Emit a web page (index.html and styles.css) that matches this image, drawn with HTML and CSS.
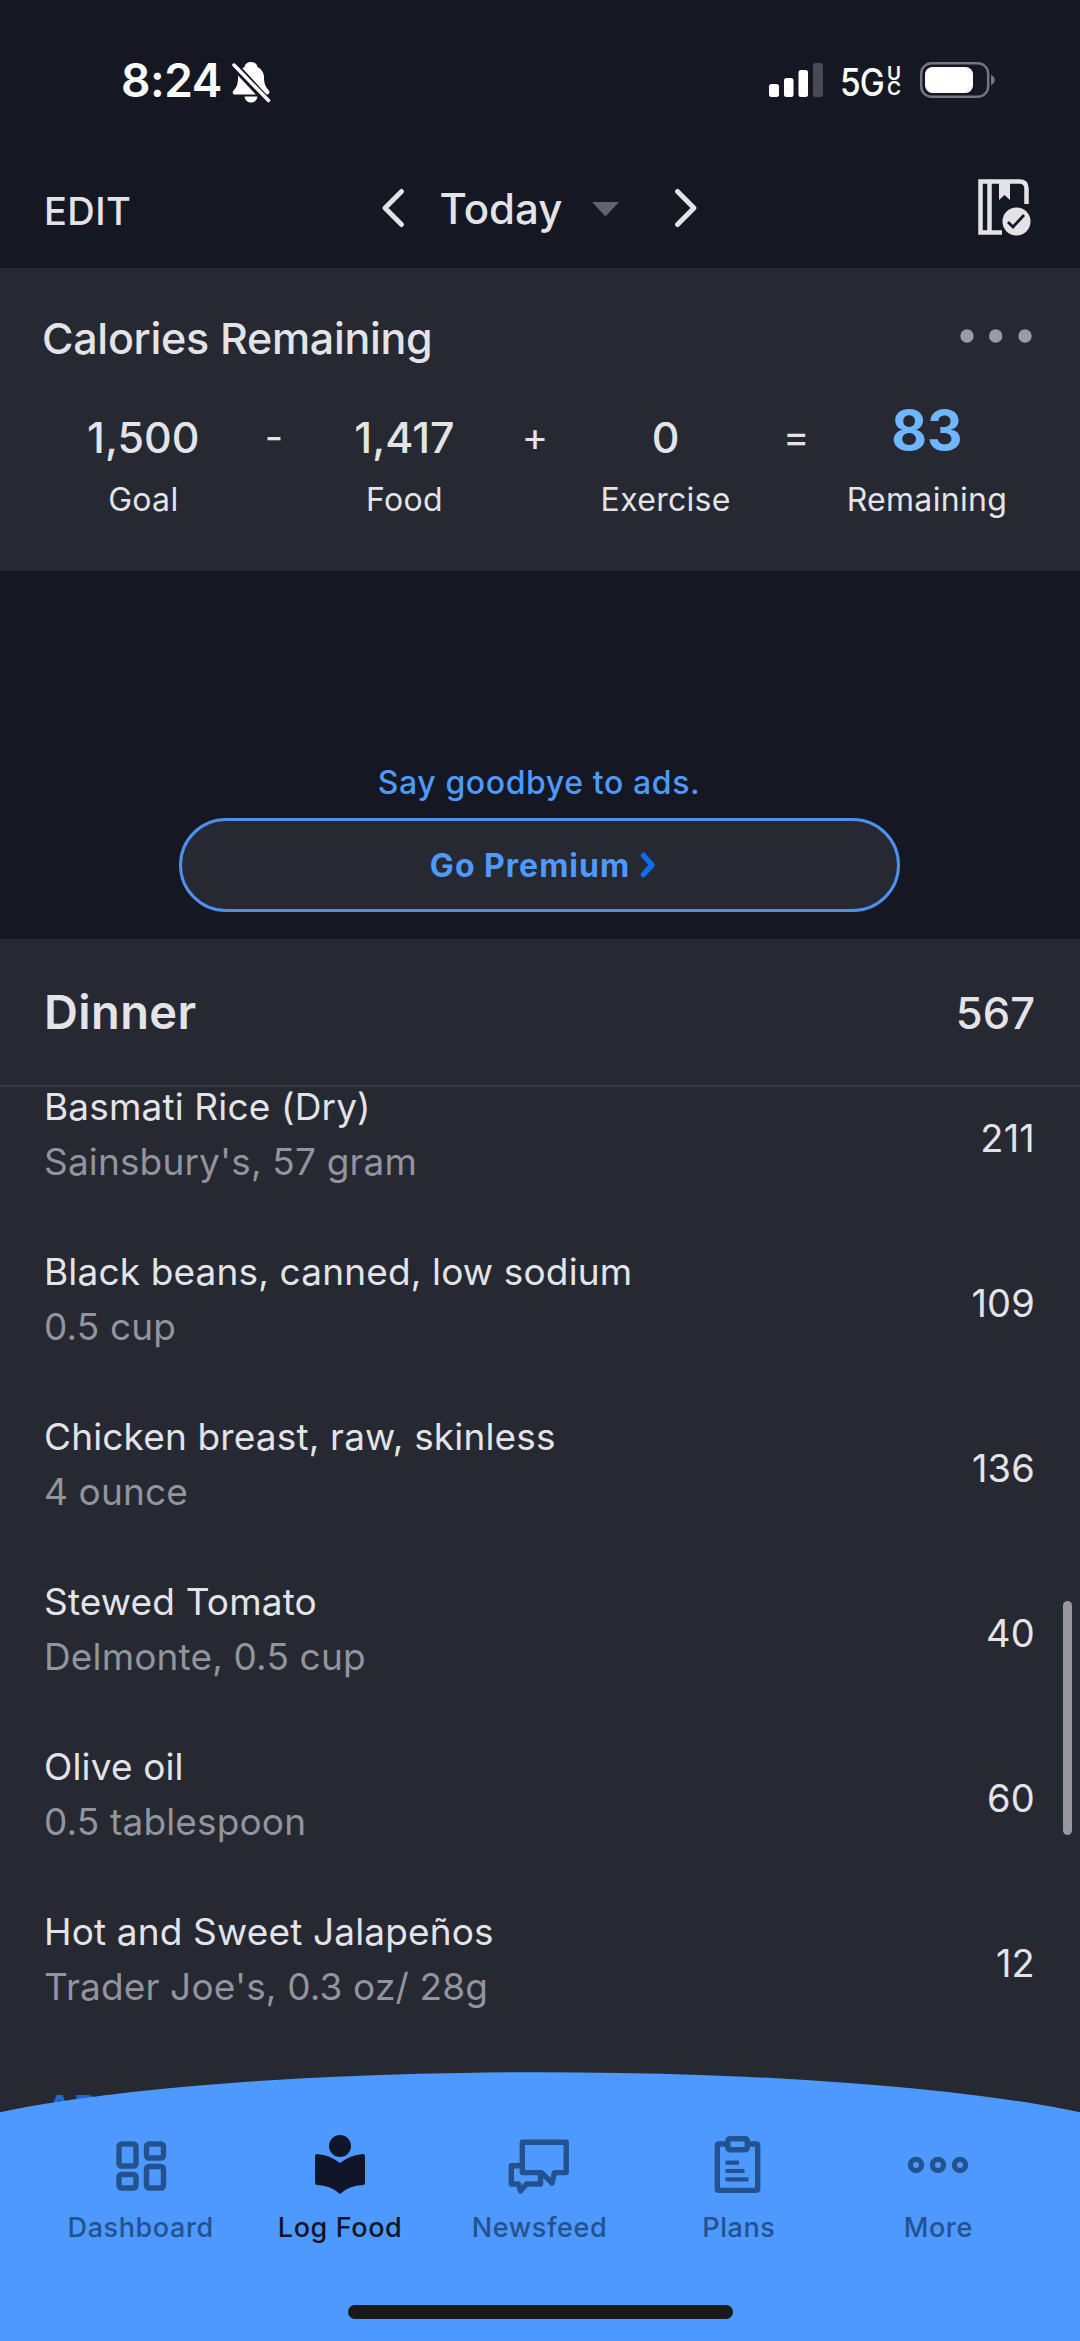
FILE: index.html
```html
<!DOCTYPE html>
<html lang="en">
<head>
<meta charset="utf-8">
<title>Food Diary</title>
<link rel="stylesheet" href="styles.css">
</head>
<body>
<div class="screen">
  <div class="status">
    <span class="time">8:24</span>
    <svg class="bell" viewBox="0 0 38 42" width="38" height="42"><path fill="#fff" d="M19 1c3.500 0 6 2 6.500 5 4 2 6.500 6 6.500 10 0 7 1.500 9.500 4.500 13 2.500 3-.5 4.500-1.500 4.500H3c-2.500 0-3-2.500-1.500-4 3-3 4.500-6 4.500-13 0-5 2.500-8.500 6.500-10.500C13 3 15.500 1 19 1zM12.500 35.500h13c-.5 3.500-3 6-6.500 6s-6-2.500-6.500-6z"/><path stroke="#151722" stroke-width="8" d="M-1 1l38 41"/><path stroke="#fff" stroke-width="3.500" stroke-linecap="round" d="M2 4l34.500 35.500"/></svg>
    <div class="status-right">
      <svg class="signal" width="54" height="34"><rect y="21" width="10" height="13" rx="2.500" fill="#fff"/><rect x="15" y="15" width="9.500" height="19" rx="2.500" fill="#fff"/><rect x="29.500" y="7" width="9.500" height="27" rx="2.500" fill="#fff"/><rect x="44" width="10" height="34" rx="2.500" fill="#484a54"/></svg>
      <span class="net">5G</span>
      <span class="uc"><span>U</span><span>C</span></span>
      <svg class="battery" width="76" height="36"><rect x="1.200" y="1.200" width="67" height="33.600" rx="10.500" fill="none" stroke="#757681" stroke-width="2.400"/><rect x="5" y="5" width="48" height="26" rx="7.500" fill="#fff"/><path fill="#757681" d="M71 13c5 1.500 5 8.500 0 10z"/></svg>
    </div>
  </div>
  <div class="nav">
    <span class="edit">EDIT</span>
    <div class="date">
      <svg width="22" height="38"><path class="chev" d="M19.500 2.500L3 19l16.500 16.500"/></svg>
      <span class="today">Today</span>
      <svg class="tri" width="27" height="15"><path fill="#636467" d="M0 0h27L13.500 14.500z"/></svg>
      <svg width="22" height="38"><path class="chev" d="M2.500 2.500L19 19 2.500 35.500"/></svg>
    </div>
    <svg class="book" viewBox="0 0 54 57" width="54" height="57"><path fill="none" stroke="#e3e3e6" stroke-width="4.500" d="M24 53.500H2.500V2.500h39q7 0 7 7V25M11.500 2.500v51"/><path fill="#e3e3e6" d="M21 2h11v19l-5.500-5L21 21z"/><circle cx="38.500" cy="42.500" r="14" fill="#e3e3e6"/><path fill="none" stroke="#151722" stroke-width="2.800" d="M30 43l5 5 11-12"/></svg>
  </div>
  <section class="summary">
    <div class="summary-head"><h2>Calories Remaining</h2><svg width="72" height="14" fill="#9b9ca3"><circle cx="7" cy="7" r="6.700"/><circle cx="35.700" cy="7" r="6.700"/><circle cx="65" cy="7" r="6.700"/></svg></div>
    <div class="equation">
      <div class="term"><b>1,500</b><span>Goal</span></div><i>-</i>
      <div class="term"><b>1,417</b><span>Food</span></div><i>+</i>
      <div class="term"><b>0</b><span>Exercise</span></div><i>=</i>
      <div class="term left"><b>83</b><span>Remaining</span></div>
    </div>
  </section>
  <section class="promo">
    <span class="bye">Say goodbye to ads.</span>
    <div class="premium"><span>Go Premium</span><svg width="16" height="26"><path fill="none" stroke="#0f6df0" stroke-width="5.500" stroke-linecap="round" stroke-linejoin="round" d="M3.500 3.500L12 13 3.500 22.500"/></svg></div>
  </section>
  <section class="meal">
    <div class="meal-head"><h1>Dinner</h1><span>567</span></div>
    <div class="foods">
      <div class="food"><div><p>Basmati Rice (Dry)</p><small>Sainsbury's, 57 gram</small></div><span>211</span></div>
      <div class="food"><div><p>Black beans, canned, low sodium</p><small>0.5 cup</small></div><span>109</span></div>
      <div class="food"><div><p>Chicken breast, raw, skinless</p><small>4 ounce</small></div><span>136</span></div>
      <div class="food"><div><p>Stewed Tomato</p><small>Delmonte, 0.5 cup</small></div><span>40</span></div>
      <div class="food"><div><p>Olive oil</p><small>0.5 tablespoon</small></div><span>60</span></div>
      <div class="food"><div><p>Hot and Sweet Jalapeños</p><small>Trader Joe's, 0.3 oz/ 28g</small></div><span>12</span></div>
      <div class="add">ADD FOOD</div>
    </div>
  </section>
  <div class="scrollbar"></div>
  <nav class="tabs">
    <svg class="curve" width="1080" height="42" viewBox="0 0 1080 42"><path fill="#4e99ff" d="M0 41.300A636 85 0 0 1 1080 41.300V42H0z"/></svg>
    <div class="tab-row">
      <div class="tab"><svg width="64" height="64"><g fill="none" stroke="currentColor" stroke-width="5.400"><rect x="10" y="12" width="17" height="22" rx="2.500"/><rect x="37.500" y="12" width="17" height="14" rx="2.500"/><rect x="10" y="42.500" width="17" height="13.500" rx="2.500"/><rect x="37.500" y="34.500" width="17" height="21.500" rx="2.500"/></g></svg><span>Dashboard</span></div>
      <div class="tab active"><svg width="64" height="64"><circle cx="32" cy="14" r="11" fill="currentColor"/><path fill="currentColor" d="M7 24q0-2 2-2 13 1 23 9 10-8 23-9 2 0 2 2v27q0 2-2 2-14 .5-23 9-9-8.500-23-9-2 0-2-2z"/></svg><span>Log Food</span></div>
      <div class="tab"><svg width="64" height="64"><path fill="none" stroke="currentColor" stroke-width="5.400" stroke-linejoin="round" d="M15.300 10.200H59.200V40.600H47.500L45 51 34.500 40.600H15.300zM15.300 33.800H4.300V52H11.500L13.500 59 19.500 52H33.500V42"/></svg><span>Newsfeed</span></div>
      <div class="tab"><svg width="64" height="64"><g fill="none" stroke="currentColor" stroke-width="5.400"><path d="M20 12h-8q-1.700 0-1.700 1.700v43q0 1.700 1.700 1.700h37q1.700 0 1.700-1.700v-43q0-1.700-1.700-1.700h-8"/><rect x="20.800" y="6.700" width="19.500" height="11" rx="2"/><path stroke-width="4.200" d="M18.500 30.700h13.500M18.500 39h19M18.500 47.300h23"/></g></svg><span>Plans</span></div>
      <div class="tab"><svg width="64" height="64"><g fill="none" stroke="currentColor" stroke-width="5.200"><circle cx="10" cy="33" r="5.600"/><circle cx="32" cy="33" r="5.600"/><circle cx="54" cy="33" r="5.600"/></g></svg><span>More</span></div>
    </div>
    <div class="home"></div>
  </nav>
</div>
</body>
</html>
```
FILE: styles.css
```css
* { box-sizing: border-box; }
body { margin: 0; background: #151722; }
h1, h2, p { margin: 0; font-weight: inherit; }
svg { display: block; flex: none; overflow: visible; }
.screen {
  position: relative;
  width: 1080px; height: 2341px;
  overflow: hidden;
  display: flex; flex-direction: column;
  background: #151722; color: #e3e3e8;
  font-family: Inter, "Liberation Sans", sans-serif;
  white-space: nowrap;
}
.status {
  height: 150px; padding: 60px 84px 0 121px;
  display: flex; align-items: flex-start; color: #fff;
}
.time { font-size: 46px; line-height: 41px; font-weight: 600; width: 111px; letter-spacing: -.4px; }
.bell { margin-top: 1px; }
.status-right { margin-left: auto; display: flex; align-items: flex-start; }
.signal { margin-top: 3px; margin-right: 17px; }
.net { font-size: 38px; line-height: 44px; font-weight: 500; width: 47px; letter-spacing: -1px; transform: scaleX(.88); transform-origin: left; }
.uc { display: flex; flex-direction: column; padding-top: 6px; width: 33px; font-size: 19px; line-height: 15px; font-weight: 600; }
.battery { margin-top: 2px; }
.nav { height: 118px; padding: 0 48px 0 44px; display: grid; grid-template-columns: 1fr 317px 1fr; align-items: start; }
.edit { font-size: 38px; line-height: 46px; margin-top: 38px; font-weight: 500; letter-spacing: .4px; }
.date { display: flex; align-items: center; margin: 39px 0 0 2px; height: 38px; }
.today { font-size: 42px; line-height: 38px; font-weight: 500; margin: 2px 0 0 36px; width: 155px; }
.tri { margin-right: 56px; margin-top: 2px; }
.chev { fill: none; stroke: #e3e3e6; stroke-width: 5; stroke-linecap: round; stroke-linejoin: round; }
.book { margin-top: 29px; justify-self: end; }
.summary { height: 303px; background: #262832; padding: 44px 48px 0 42px; }
.summary-head { display: flex; justify-content: space-between; align-items: center; height: 48px; }
.summary-head h2 { font-size: 43px; line-height: 52px; font-weight: 500; letter-spacing: -.3px; padding-top: 4px; }
.equation { display: grid; grid-template-columns: repeat(7, 130.6px); margin-left: 36px; padding-top: 47px; text-align: center; }
.equation i { font-style: normal; font-size: 40px; line-height: 60px; }
.term { display: flex; flex-direction: column; align-items: center; }
.term b { font-size: 43px; line-height: 60px; height: 73px; font-weight: 500; }
.term span { font-size: 32px; line-height: 40px; letter-spacing: .3px; }
.term.left b { color: #6fb5ff; font-size: 55px; line-height: 47px; font-weight: 700; }
.promo { height: 368px; padding-top: 192px; display: flex; flex-direction: column; align-items: center; color: #4e99ff; }
.bye { font-size: 32px; line-height: 40px; font-weight: 500; margin: 0 2px 15px 0; letter-spacing: .6px; }
.premium { width: 721px; height: 94px; margin-right: 1px; padding-left: 7px; border: 3px solid #4e90f0; border-radius: 47px; background: #262832; display: flex; align-items: center; justify-content: center; gap: 10px; font-size: 32px; font-weight: 700; letter-spacing: 1px; }
.meal { flex: 1; background: #262832; min-height: 0; }
.meal-head { height: 148px; padding: 0 45px 1px 44px; border-bottom: 2px solid #353742; display: flex; align-items: center; justify-content: space-between; }
.meal-head h1 { font-size: 47px; font-weight: 600; letter-spacing: .4px; }
.meal-head span { font-size: 43.5px; font-weight: 500; padding-top: 2px; }
.food { height: 165px; padding: 0 45px 0 44px; display: flex; align-items: flex-start; justify-content: space-between; font-size: 37px; letter-spacing: .15px; }
.food p { line-height: 55px; margin-top: -8px; }
.food small { display: block; font-size: 37px; line-height: 55px; color: #92949e; }
.food > span { font-size: 38px; letter-spacing: .2px; line-height: 55px; margin-top: 24px; }
.add { padding-left: 46px; font-size: 38px; line-height: 46px; margin-top: 9px; font-weight: 600; color: #2068d4; }
.scrollbar { position: absolute; left: 1063px; top: 1601px; width: 9px; height: 234px; border-radius: 5px; background: #96979f; }
.tabs { position: absolute; left: 0; right: 0; bottom: 0; height: 270px; color: #24528f; }
.curve { position: absolute; left: 0; top: 0; }
.tab-row { margin-top: 41px; height: 229px; background: #4e99ff; padding: 20px 42px 0 41px; display: grid; grid-template-columns: repeat(5, 1fr); align-items: start; }
.tab { display: flex; flex-direction: column; align-items: center; font-size: 27px; line-height: 34px; font-weight: 500; letter-spacing: .6px; }
.tab span { margin-top: 15px; }
.tab.active { color: #11152a; }
.home { position: absolute; left: 348px; top: 234px; width: 385px; height: 14px; border-radius: 7px; background: #191919; }
```
